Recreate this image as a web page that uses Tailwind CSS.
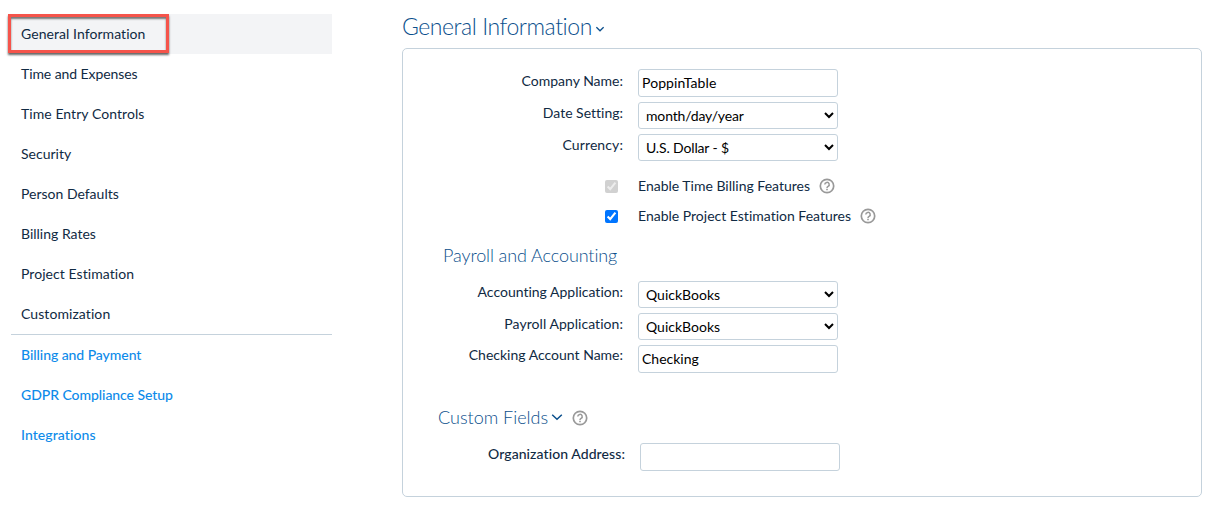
<!DOCTYPE html>
<html lang="en">
<head>
  <meta charset="UTF-8" />
  <meta name="viewport" content="width=device-width, initial-scale=1.0"/>
  <title>General Information | Company Setup</title>
  <script src="https://cdn.jsdelivr.net/npm/@tailwindcss/browser@4"></script>
</head>
<body class="bg-white text-[#102a43] font-[Lato,sans-serif] text-sm leading-5 overflow-hidden [font-variant-ligatures:none]">
  <svg class="hidden">
    <symbol id="help" viewBox="0 0 16 16">
      <circle cx="8" cy="8" r="6.7" fill="none" stroke="#999" stroke-width="1.7"/>
      <path d="M5.8 6.5a2.2 2.1 0 1 1 3.3 1.8c-.8.5-1.1.8-1.1 1.6" fill="none" stroke="#999" stroke-width="1.5"/>
      <path d="M7.2 10.8h1.6v1.5H7.2z" fill="#999"/>
    </symbol>
  </svg>
  <div class="flex">
    <nav class="relative ml-[11px] mt-3.5 w-[321px] shrink-0">
      <!-- highlight around the current section -->
      <div class="absolute -left-[3px] top-0 h-[39px] w-[161px] border-3 border-[#f5544b] shadow-[0_2px_2px_#666,inset_0_2px_2px_#777]"></div>
      <a href="#" class="flex h-10 items-center bg-[#f3f4f6] pl-2.5 tracking-[0.06px]">General Information</a>
      <a href="#" class="flex h-10 items-center pl-2.5 tracking-[-0.08px]">Time and Expenses</a>
      <a href="#" class="flex h-10 items-center pl-2.5 tracking-[0.06px]">Time Entry Controls</a>
      <a href="#" class="flex h-10 items-center pl-2.5">Security</a>
      <a href="#" class="flex h-10 items-center pl-2.5">Person Defaults</a>
      <a href="#" class="flex h-10 items-center pl-2.5">Billing Rates</a>
      <a href="#" class="flex h-10 items-center pl-2.5 tracking-[0.06px]">Project Estimation</a>
      <a href="#" class="flex h-10 items-center pl-2.5 tracking-[0.08px]">Customization</a>
      <div class="border-t border-[#c5d2dc] font-medium text-[#0d8bea]">
        <a href="#" class="flex h-10 items-center pl-2.5 tracking-[-0.06px]">Billing and Payment</a>
        <a href="#" class="flex h-10 items-center pl-2.5 tracking-[-0.06px]">GDPR Compliance Setup</a>
        <a href="#" class="flex h-10 items-center pl-2.5 tracking-[0.08px]">Integrations</a>
      </div>
    </nav>
    <main class="ml-[70px] w-[800px] shrink-0 pt-3">
      <h1 class="flex h-7 items-center text-[23px] font-light tracking-[-0.45px] text-[#0b4f8c]">General Information
        <svg class="ml-1 mt-1.5 h-2 w-2" viewBox="0 0 8 8" fill="none" stroke="currentColor" stroke-width="1.3"><path d="M.4 2.2 4 5.8l3.6-3.6"/></svg>
      </h1>
      <form class="mt-2 h-[449px] rounded-[5px] border border-[#c5d2dc] pt-5">
        <div class="space-y-[5px]">
          <div class="flex h-7">
            <label for="company" class="mr-[15px] w-[220px] pt-0.5 text-right">Company Name:</label>
            <input id="company" type="text" value="PoppinTable" class="h-7 w-[200px] rounded-[3px] border border-[#c5d2dc] px-[3px] pb-0.5 tracking-[0.1px] text-black">
          </div>
          <div class="flex h-[27px]">
            <label for="date" class="mr-[15px] w-[220px] pt-px text-right">Date Setting:</label>
            <select id="date" class="h-[27px] w-[200px] rounded-[3px] border border-[#c5d2dc] bg-white px-[3px] tracking-[-0.15px] text-black"><option>month/day/year</option></select>
          </div>
          <div class="flex h-[27px]">
            <label for="currency" class="mr-[15px] w-[220px] pt-px text-right tracking-[0.1px]">Currency:</label>
            <select id="currency" class="h-[27px] w-[200px] rounded-[3px] border border-[#c5d2dc] bg-white px-[3px] tracking-[-0.15px] text-black"><option>U.S. Dollar - $</option></select>
          </div>
        </div>
        <div class="mt-2.5 pl-[202px]">
          <label class="flex h-[30px] items-center">
            <input type="checkbox" checked disabled class="mr-5 h-[13px] w-[13px]">Enable Time Billing Features
            <svg class="ml-[9px] h-4 w-4"><use href="#help"/></svg>
          </label>
          <label class="flex h-[30px] items-center">
            <input type="checkbox" checked class="mr-5 h-[13px] w-[13px]">Enable Project Estimation Features
            <svg class="ml-[9px] h-4 w-4"><use href="#help"/></svg>
          </label>
        </div>
        <h2 class="ml-10 mt-3 text-lg leading-6 font-light tracking-[-0.1px] text-[#0b4f8c]">Payroll and Accounting</h2>
        <div class="mt-3.5 space-y-[5px]">
          <div class="flex h-[27px]">
            <label for="accounting" class="mr-[15px] w-[220px] pt-px text-right">Accounting Application:</label>
            <select id="accounting" class="h-[27px] w-[200px] rounded-[3px] border border-[#c5d2dc] bg-white px-[3px] text-black"><option>QuickBooks</option></select>
          </div>
          <div class="flex h-[27px]">
            <label for="payroll" class="mr-[15px] w-[220px] pt-px text-right tracking-[0.05px]">Payroll Application:</label>
            <select id="payroll" class="h-[27px] w-[200px] rounded-[3px] border border-[#c5d2dc] bg-white px-[3px] text-black"><option>QuickBooks</option></select>
          </div>
          <div class="flex h-7">
            <label for="checking" class="mr-[15px] w-[220px] text-right">Checking Account Name:</label>
            <input id="checking" type="text" value="Checking" class="h-7 w-[200px] rounded-[3px] border border-[#c5d2dc] px-[3px] pb-0.5 text-black">
          </div>
        </div>
        <h2 class="ml-[35px] mt-8 flex h-6 items-center text-lg font-light text-[#0b4f8c]">Custom Fields
          <svg class="ml-[3px] h-3 w-3" viewBox="0 0 12 12" fill="none" stroke="currentColor" stroke-width="1.5"><path d="m1.2 3.8 4.8 4.4 4.8-4.4"/></svg>
          <svg class="ml-[9px] mt-px h-4 w-4"><use href="#help"/></svg>
        </h2>
        <div class="mt-3.5 flex h-7">
          <label for="address" class="mr-[15px] w-[222px] pt-px text-right font-medium tracking-[0.08px]">Organization Address:</label>
          <input id="address" type="text" class="h-7 w-[200px] rounded-[3px] border border-[#c5d2dc] px-[3px] text-black">
        </div>
      </form>
    </main>
  </div>
</body>
</html>
